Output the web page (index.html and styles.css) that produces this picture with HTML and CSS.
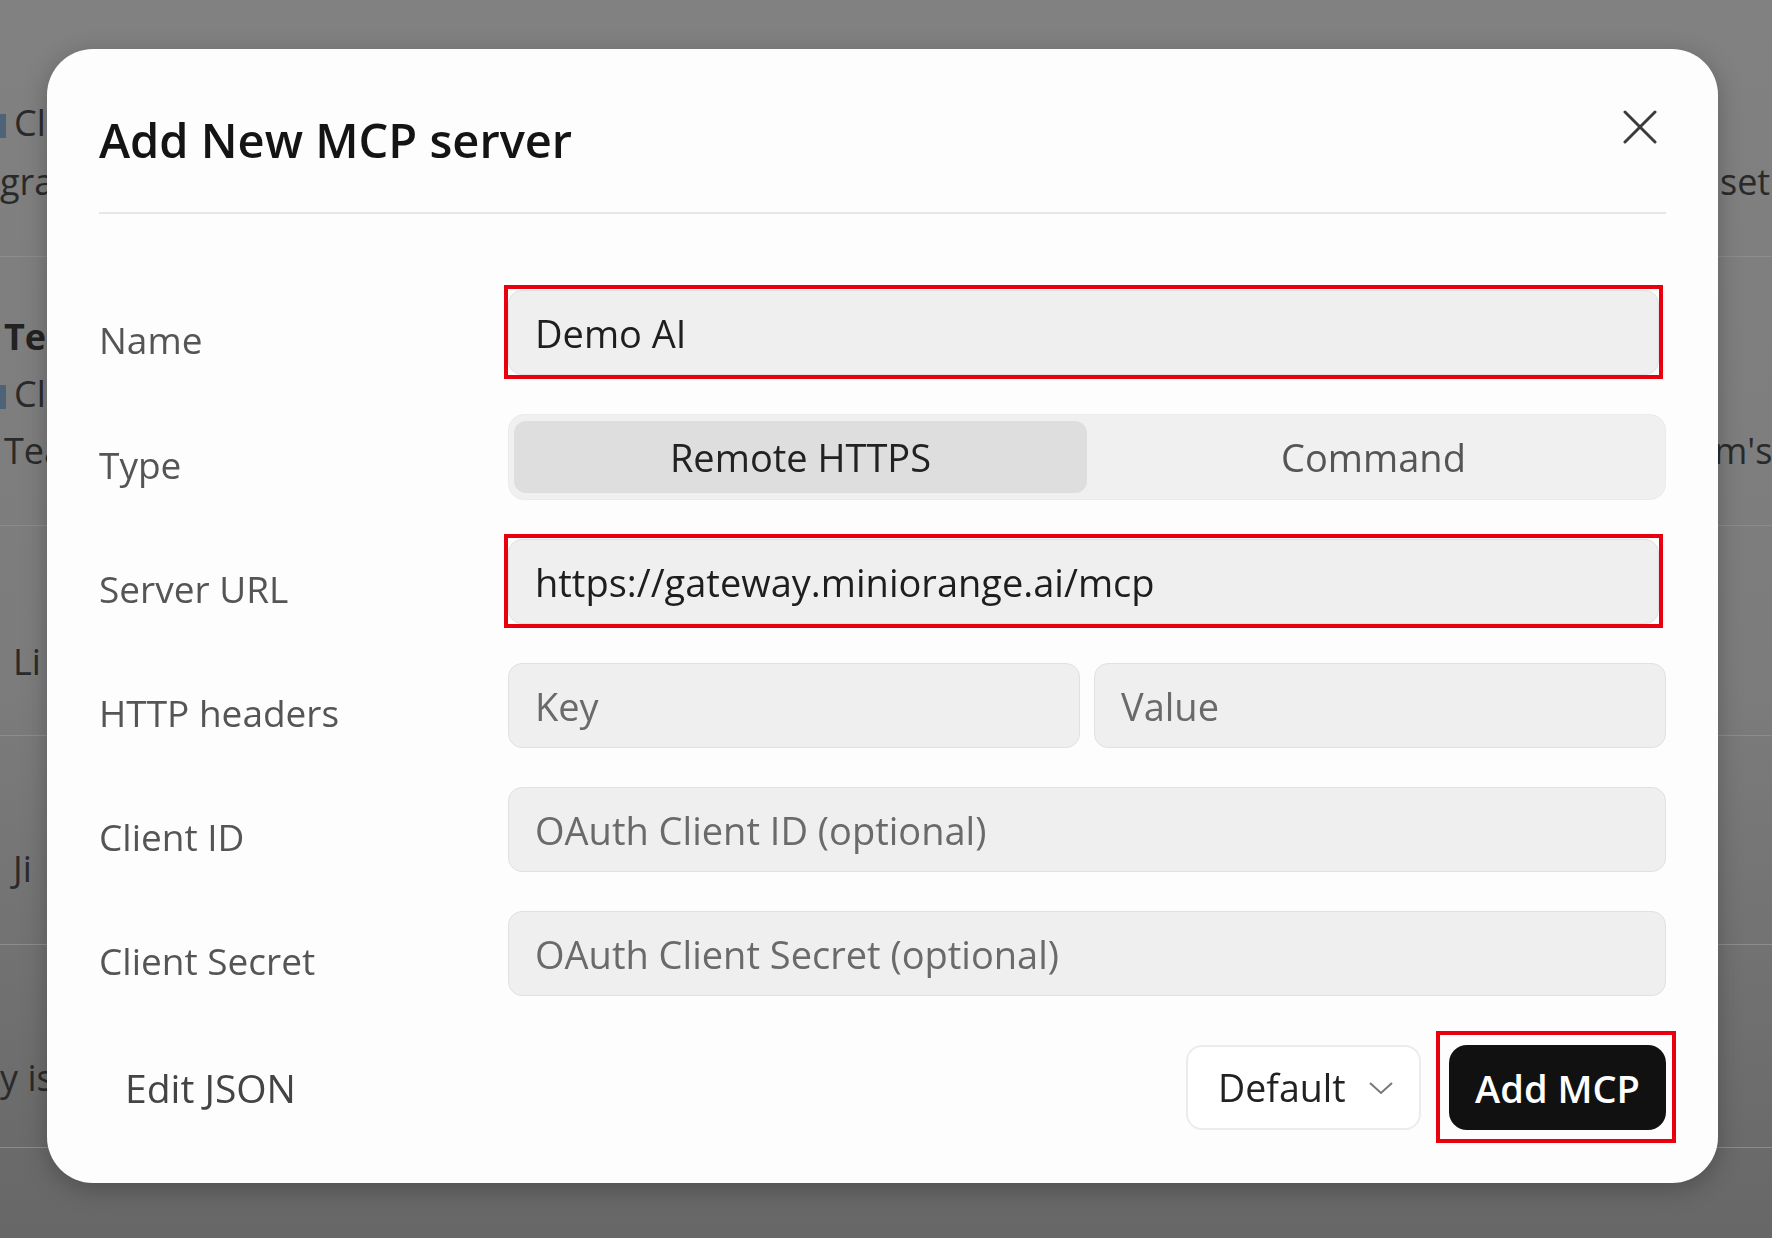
FILE: index.html
```html
<!DOCTYPE html>
<html>
<head>
    <title>Add New MCP server</title>
    <link rel="stylesheet" href="styles.css">
</head>
<body>
    <!-- page behind the dialog, dimmed -->
    <div class="page">
        <div class="page-row row-1">
            <div class="cell-left">
                <div class="bg-line"><span class="bg-icon"></span>Cl</div>
                <div class="bg-line">gra</div>
            </div>
            <div class="cell-right">
                <div class="bg-line">&nbsp;</div>
                <div class="bg-line">set</div>
            </div>
        </div>
        <div class="page-row row-2">
            <div class="cell-left">
                <div class="bg-line small-indent strong">Tea</div>
                <div class="bg-line"><span class="bg-icon"></span>Cl</div>
                <div class="bg-line small-indent">Tea</div>
            </div>
            <div class="cell-right">
                <div class="bg-line">&nbsp;</div>
                <div class="bg-line">&nbsp;</div>
                <div class="bg-line shifted">m's</div>
            </div>
        </div>
        <div class="page-row row-3">
            <div class="cell-left"><div class="bg-line indent">Li</div></div>
        </div>
        <div class="page-row row-4">
            <div class="cell-left"><div class="bg-line indent">Ji</div></div>
        </div>
        <div class="page-row row-5">
            <div class="cell-left"><div class="bg-line">y is</div></div>
        </div>
    </div>

    <div class="overlay">
        <div class="modal">
            <div class="modal-header">
                <h2>Add New MCP server</h2>
                <button class="close-btn" type="button" aria-label="Close">
                    <svg width="34" height="34" viewBox="0 0 34 34">
                        <line x1="2" y1="2" x2="32" y2="32" />
                        <line x1="32" y1="2" x2="2" y2="32" />
                    </svg>
                </button>
            </div>

            <form class="modal-body">
                <div class="form-row">
                    <label for="name">Name</label>
                    <div class="mark">
                        <input id="name" class="field" type="text" value="Demo AI">
                    </div>
                </div>
                <div class="form-row">
                    <label>Type</label>
                    <div class="segmented">
                        <div class="segment active">Remote HTTPS</div>
                        <div class="segment">Command</div>
                    </div>
                </div>
                <div class="form-row">
                    <label for="url">Server URL</label>
                    <div class="mark">
                        <input id="url" class="field" type="text" value="https://gateway.miniorange.ai/mcp">
                    </div>
                </div>
                <div class="form-row">
                    <label>HTTP headers</label>
                    <div class="pair">
                        <input class="field" type="text" placeholder="Key">
                        <input class="field" type="text" placeholder="Value">
                    </div>
                </div>
                <div class="form-row">
                    <label for="client-id">Client ID</label>
                    <input id="client-id" class="field" type="text" placeholder="OAuth Client ID (optional)">
                </div>
                <div class="form-row">
                    <label for="client-secret">Client Secret</label>
                    <input id="client-secret" class="field" type="text" placeholder="OAuth Client Secret (optional)">
                </div>
            </form>

            <div class="modal-footer">
                <button class="link-btn" type="button">Edit JSON</button>
                <div class="select">
                    <span>Default</span>
                    <svg width="26" height="14" viewBox="0 0 26 14">
                        <polyline points="2,2 13,12 24,2" />
                    </svg>
                </div>
                <div class="mark mark-btn">
                    <button class="primary-btn" type="button">Add MCP</button>
                </div>
            </div>
        </div>
    </div>
</body>
</html>
```

FILE: styles.css
```css
* { box-sizing: border-box; }

body {
    margin: 0;
    height: 1238px;
    overflow: hidden;
    font-family: "Open Sans", "Noto Sans", sans-serif;
    background: linear-gradient(180deg, #818181 0%, #7c7c7c 55%, #676767 100%);
    color: #2a2a2a;
}

/* dimmed page */
.page { display: flex; flex-direction: column; }
.page-row {
    display: flex;
    justify-content: space-between;
    border-bottom: 1px solid #8c8c8c;
    font-size: 36px;
    line-height: 57px;
    overflow: hidden;
}
.row-1 { height: 257px; padding-top: 93px; line-height: 59px; }
.row-2 { height: 269px; padding-top: 51px; }
.row-3 { height: 210px; padding-top: 107px; }
.row-4 { height: 209px; padding-top: 104px; }
.row-5 { height: 203px; padding-top: 104px; }
.cell-right { width: 52px; }
.bg-line { white-space: nowrap; }
.indent { padding-left: 13px; }
.small-indent { padding-left: 4px; }
.shifted { margin-left: -6px; }
.strong { font-weight: 700; color: #222; }
.bg-icon {
    display: inline-block;
    width: 6px;
    height: 24px;
    margin-right: 8px;
    background: #4d6478;
    vertical-align: -2px;
}

/* dialog */
.overlay {
    position: fixed;
    inset: 0;
    padding: 49px 54px 55px 47px;
}
.modal {
    height: 100%;
    display: flex;
    flex-direction: column;
    padding: 61px 52px 53px 52px;
    background: #fdfdfd;
    border-radius: 46px;
    box-shadow: 0 6px 24px rgba(0, 0, 0, 0.25);
}

.modal-header {
    display: flex;
    justify-content: space-between;
    align-items: flex-start;
    padding-bottom: 42px;
    border-bottom: 2px solid #e7e7e7;
}
.modal-header h2 {
    margin: 0;
    font-size: 47px;
    font-weight: 600;
    line-height: 60px;
    color: #141414;
}
.close-btn {
    padding: 0;
    margin-right: 9px;
    border: none;
    background: none;
    cursor: pointer;
}
.close-btn svg { display: block; }
.close-btn line { stroke: #3c3c3c; stroke-width: 3; stroke-linecap: round; }

.modal-body {
    display: flex;
    flex-direction: column;
    gap: 39px;
    padding-top: 76px;
}
.form-row {
    display: grid;
    grid-template-columns: 409px 1fr;
    align-items: center;
}
.form-row label {
    padding-top: 14px;
    font-size: 37px;
    color: #555;
}

.field {
    width: 100%;
    height: 85px;
    padding: 0 26px;
    border: 1.5px solid #e1e1e1;
    border-radius: 14px;
    background: #efefef;
    font-family: inherit;
    font-size: 38px;
    color: #1e1e1e;
    outline: none;
}
.field::placeholder { color: #6a6a6a; }

/* red highlight boxes from the screenshot */
.mark {
    margin: -5px 3px -4px -4px;
    padding-top: 1px;
    border: 4px solid #e8000e;
}
.mark .field { display: block; }

.segmented {
    display: grid;
    grid-template-columns: 1fr 1fr;
    height: 86px;
    padding: 6px 5px;
    border: 1px solid #ebebeb;
    border-radius: 16px;
    background: #f0f0f0;
}
.segment {
    display: flex;
    align-items: center;
    justify-content: center;
    border-radius: 12px;
    font-size: 38px;
    color: #555;
}
.segment.active { background: #dedede; color: #222; }

.pair {
    display: grid;
    grid-template-columns: 1fr 1fr;
    gap: 14px;
}

.modal-footer {
    display: flex;
    align-items: center;
    margin-top: auto;
}
.link-btn {
    margin-right: auto;
    padding: 0 26px;
    border: none;
    background: none;
    font-family: inherit;
    font-size: 39px;
    color: #444;
}
.select {
    display: flex;
    align-items: center;
    justify-content: space-between;
    width: 235px;
    height: 85px;
    padding: 0 25px 0 30px;
    border: 2px solid #ececec;
    border-radius: 16px;
    background: #fff;
    font-size: 37.5px;
    color: #222;
}
.select polyline { fill: none; stroke: #777; stroke-width: 2; }
.mark-btn {
    margin: -14px -10px -13px 15px;
    padding: 10px 6px 9px 9px;
}
.primary-btn {
    display: block;
    width: 217px;
    height: 85px;
    border: none;
    border-radius: 18px;
    background: #111;
    font-family: inherit;
    font-size: 38px;
    font-weight: 600;
    color: #fff;
}
```
